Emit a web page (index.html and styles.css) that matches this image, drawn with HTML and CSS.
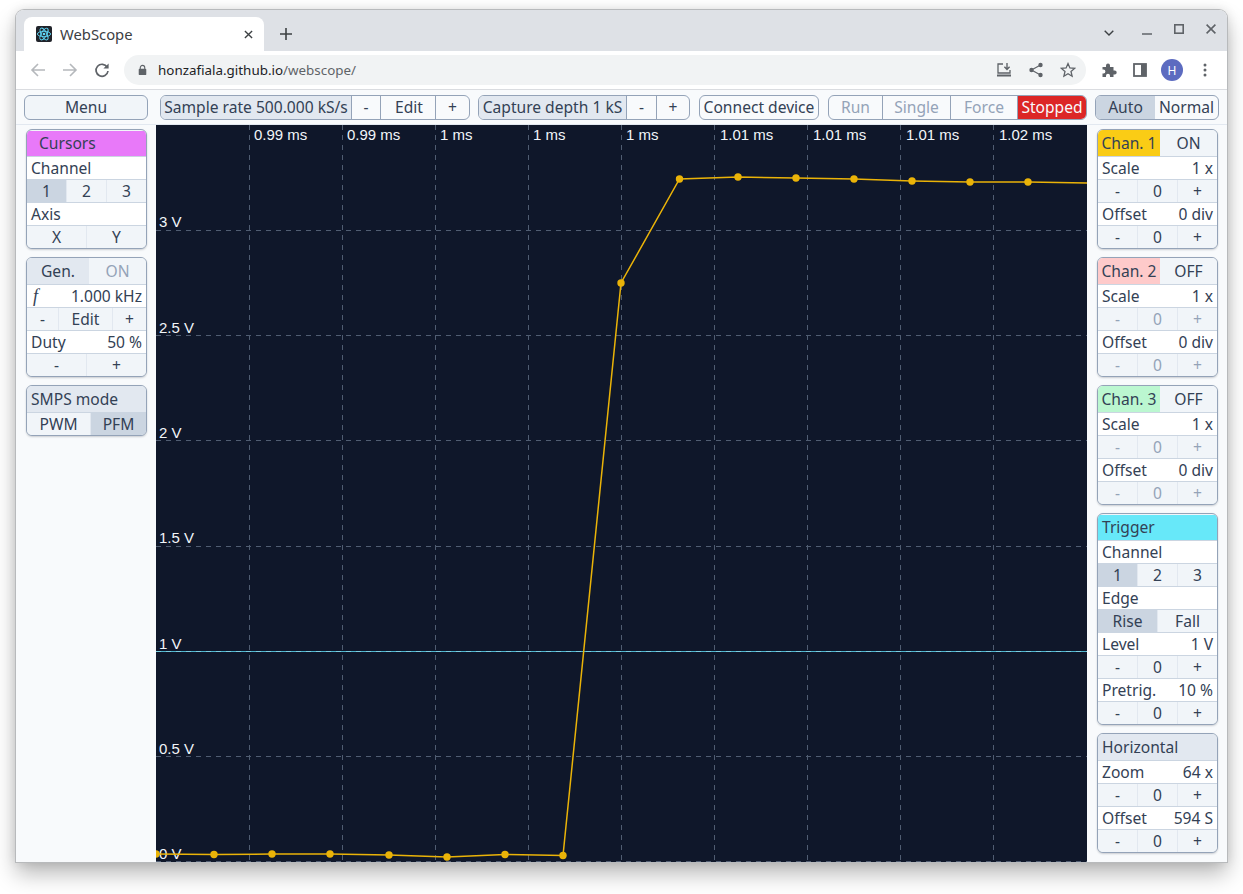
FILE: index.html
```html
<!DOCTYPE html>
<html lang="en">
<head>
<meta charset="utf-8">
<title>WebScope</title>
<link rel="stylesheet" href="styles.css">
</head>
<body>
<div class="window">
  <div class="tabstrip">
    <div class="tab">
      <svg class="favicon" viewBox="0 0 16 16"><rect width="16" height="16" rx="2" fill="#20232a"/><g fill="none" stroke="#61dafb" stroke-width=".9"><ellipse cx="8" cy="8" rx="6.6" ry="2.7"/><ellipse cx="8" cy="8" rx="6.6" ry="2.7" transform="rotate(60 8 8)"/><ellipse cx="8" cy="8" rx="6.6" ry="2.7" transform="rotate(120 8 8)"/></g><circle cx="8" cy="8" r="1.3" fill="#61dafb"/></svg>
      <span class="tabtitle">WebScope</span>
      <svg class="tabclose" viewBox="0 0 10 10"><path d="M1 1l8 8M9 1l-8 8" stroke="#3c4043" stroke-width="1.5"/></svg>
    </div>
    <svg class="newtab" viewBox="0 0 12 12"><path d="M6 0v12M0 6h12" stroke="#3c4043" stroke-width="1.6"/></svg>
    <div class="winctl">
      <svg class="chev" viewBox="0 0 10 6"><path d="M.7.7L5 5l4.3-4.3" fill="none" stroke="#3c4043" stroke-width="1.4"/></svg>
      <svg class="wmin" viewBox="0 0 10 2"><path d="M0 1h10" stroke="#5f6368" stroke-width="1.6"/></svg>
      <svg class="wmax" viewBox="0 0 10 10"><rect x=".8" y=".8" width="8.4" height="8.4" fill="none" stroke="#5f6368" stroke-width="1.6"/></svg>
      <svg class="wclose" viewBox="0 0 10 10"><path d="M.6.6l8.8 8.8M9.4.6L.6 9.4" stroke="#5f6368" stroke-width="1.6"/></svg>
    </div>
  </div>
  <div class="toolbar">
    <svg class="nav nav-first" viewBox="0 0 16 16"><path d="M15 8H2M8 2L2 8l6 6" fill="none" stroke="#b5b8bc" stroke-width="1.6"/></svg>
    <svg class="nav" viewBox="0 0 16 16"><path d="M1 8h13M8 2l6 6-6 6" fill="none" stroke="#b5b8bc" stroke-width="1.6"/></svg>
    <svg class="nav" viewBox="0 0 16 16"><path d="M13.2 5.2A6 6 0 1 0 14 9" fill="none" stroke="#5f6368" stroke-width="1.7"/><path d="M14.6 1.4v5.2H9.4z" fill="#5f6368"/></svg>
    <div class="omnibox">
      <svg class="lock" viewBox="0 0 10 12"><path d="M2.5 5V3.4a2.5 2.5 0 0 1 5 0V5" fill="none" stroke="#5f6368" stroke-width="1.2"/><rect x=".8" y="4.6" width="8.4" height="7" rx="1" fill="#5f6368"/></svg>
      <span class="url"><span class="host">honzafiala.github.io</span>/webscope/</span>
      <span class="omni-icons">
        <svg class="oi" viewBox="0 0 16 16"><path d="M7 2H2v9h12V8" fill="none" stroke="#5f6368" stroke-width="1.3"/><path d="M1 13.5h14" stroke="#5f6368" stroke-width="2"/><path d="M11 1v6M8.4 4.8L11 7.4l2.6-2.6" fill="none" stroke="#5f6368" stroke-width="1.4"/></svg>
        <svg class="oi" viewBox="0 0 16 16"><circle cx="12.5" cy="3" r="2.2" fill="#5f6368"/><circle cx="3.5" cy="8" r="2.2" fill="#5f6368"/><circle cx="12.5" cy="13" r="2.2" fill="#5f6368"/><path d="M12.5 3l-9 5 9 5" fill="none" stroke="#5f6368" stroke-width="1.2"/></svg>
        <svg class="oi" viewBox="0 0 16 16"><path d="M8 1.6l1.9 4.4 4.7.4-3.6 3.1 1.1 4.7L8 11.7l-4.1 2.5L5 9.5 1.4 6.4l4.7-.4z" fill="none" stroke="#5f6368" stroke-width="1.3"/></svg>
      </span>
    </div>
    <svg class="ext" viewBox="0 0 16 16"><path d="M1.5 5H5V3.6a2 2 0 0 1 4 0V5h3.5v3.4h1.2a2 2 0 0 1 0 4h-1.2V15H9v-1.2a2 2 0 0 0-4 0V15H1.5v-3.6h1a1.9 1.9 0 0 0 0-3.8h-1z" fill="#5f6368"/></svg>
    <svg class="side" viewBox="0 0 14 14"><rect x="1" y="1" width="12" height="12" fill="none" stroke="#5f6368" stroke-width="1.8"/><rect x="8" y="1" width="5" height="12" fill="#5f6368"/></svg>
    <span class="avatar">H</span>
    <svg class="dots" viewBox="0 0 4 14"><circle cx="2" cy="2" r="1.5" fill="#5f6368"/><circle cx="2" cy="7" r="1.5" fill="#5f6368"/><circle cx="2" cy="12" r="1.5" fill="#5f6368"/></svg>
  </div>
  <div class="app">
    <div class="topbar">
      <button class="btn menu">Menu</button>
      <div class="group g-rate"><span class="cell lab">Sample rate 500.000 kS/s</span><button class="cell rate-minus">-</button><button class="cell rate-edit">Edit</button><button class="cell rate-plus">+</button></div>
      <div class="group g-depth"><span class="cell lab">Capture depth 1 kS</span><button class="cell depth-minus">-</button><button class="cell depth-plus">+</button></div>
      <button class="btn connect">Connect device</button>
      <div class="group g-run"><button class="cell dis run">Run</button><button class="cell dis single">Single</button><button class="cell dis force">Force</button><button class="cell stopped">Stopped</button></div>
      <div class="group g-mode"><button class="cell on auto">Auto</button><button class="cell normal">Normal</button></div>
    </div>
    <div class="main">
      <div class="col">
        <section class="panel">
          <div class="row head magenta"><span class="indent">Cursors</span></div>
          <div class="row text"><span>Channel</span></div>
          <div class="row btns"><button class="on">1</button><button>2</button><button>3</button></div>
          <div class="row text"><span>Axis</span></div>
          <div class="row btns"><button>X</button><button>Y</button></div>
        </section>
        <section class="panel">
          <div class="row head split"><span class="hl gen">Gen.</span><span class="tog dim">ON</span></div>
          <div class="row text"><i class="f">f</i><span>1.000 kHz</span></div>
          <div class="row btns freq"><button>-</button><button>Edit</button><button>+</button></div>
          <div class="row text"><span>Duty</span><span>50 %</span></div>
          <div class="row btns"><button>-</button><button>+</button></div>
        </section>
        <section class="panel">
          <div class="row head plain"><span>SMPS mode</span></div>
          <div class="row btns smps"><button>PWM</button><button class="on">PFM</button></div>
        </section>
      </div>
      <svg class="plot" viewBox="0 0 931 737" preserveAspectRatio="none">
        <rect width="931" height="737" fill="#0f172a"/>
        <g class="grid">
          <path d="M93.5 0V737M186.5 0V737M279.5 0V737M372.5 0V737M465.5 0V737M558.5 0V737M651.5 0V737M744.5 0V737M837.5 0V737"/>
          <path d="M0 105.5H931M0 210.5H931M0 315.5H931M0 421.5H931M0 631.5H931M0 736.5H931"/>
        </g>
        <path class="trig" d="M0 526.5H931"/>
        <path class="trig-dash" d="M0 526.5H931"/>
        <g class="tlabels">
          <text x="98" y="15">0.99 ms</text><text x="191" y="15">0.99 ms</text><text x="284" y="15">1 ms</text><text x="377" y="15">1 ms</text><text x="470" y="15">1 ms</text><text x="564" y="15">1.01 ms</text><text x="657" y="15">1.01 ms</text><text x="750" y="15">1.01 ms</text><text x="843" y="15">1.02 ms</text>
          <text x="3" y="102">3 V</text><text x="3" y="208">2.5 V</text><text x="3" y="313">2 V</text><text x="3" y="418">1.5 V</text><text x="3" y="524">1 V</text><text x="3" y="629">0.5 V</text><text x="3" y="734">0 V</text>
        </g>
        <polyline class="trace" points="0,729 58,729.5 116,729 174,729 233,730 291,732 349,729.5 407,730.5 465,158 523.5,54 582,52 640,53 698,54 756,56 814,57 872,57 931,58"/>
        <g class="pts">
          <circle cx="0" cy="729" r="3.7"/><circle cx="58" cy="729.5" r="3.7"/><circle cx="116" cy="729" r="3.7"/><circle cx="174" cy="729" r="3.7"/><circle cx="233" cy="730" r="3.7"/><circle cx="291" cy="732" r="3.7"/><circle cx="349" cy="729.5" r="3.7"/><circle cx="407" cy="730.5" r="3.7"/><circle cx="465" cy="158" r="3.7"/><circle cx="523.5" cy="54" r="3.7"/><circle cx="582" cy="52" r="3.7"/><circle cx="640" cy="53" r="3.7"/><circle cx="698" cy="54" r="3.7"/><circle cx="756" cy="56" r="3.7"/><circle cx="814" cy="57" r="3.7"/><circle cx="872" cy="57" r="3.7"/>
        </g>
      </svg>
      <div class="col">
        <section class="panel">
          <div class="row head split"><span class="hl chan yellow">Chan. 1</span><span class="tog">ON</span></div>
          <div class="row text"><span>Scale</span><span>1 x</span></div>
          <div class="row btns"><button>-</button><button>0</button><button>+</button></div>
          <div class="row text"><span>Offset</span><span>0 div</span></div>
          <div class="row btns"><button>-</button><button>0</button><button>+</button></div>
        </section>
        <section class="panel">
          <div class="row head split"><span class="hl chan red">Chan. 2</span><span class="tog">OFF</span></div>
          <div class="row text"><span>Scale</span><span>1 x</span></div>
          <div class="row btns off"><button>-</button><button>0</button><button>+</button></div>
          <div class="row text"><span>Offset</span><span>0 div</span></div>
          <div class="row btns off"><button>-</button><button>0</button><button>+</button></div>
        </section>
        <section class="panel">
          <div class="row head split"><span class="hl chan green">Chan. 3</span><span class="tog">OFF</span></div>
          <div class="row text"><span>Scale</span><span>1 x</span></div>
          <div class="row btns off"><button>-</button><button>0</button><button>+</button></div>
          <div class="row text"><span>Offset</span><span>0 div</span></div>
          <div class="row btns off"><button>-</button><button>0</button><button>+</button></div>
        </section>
        <section class="panel">
          <div class="row head cyan"><span>Trigger</span></div>
          <div class="row text"><span>Channel</span></div>
          <div class="row btns"><button class="on">1</button><button>2</button><button>3</button></div>
          <div class="row text"><span>Edge</span></div>
          <div class="row btns"><button class="on">Rise</button><button>Fall</button></div>
          <div class="row text"><span>Level</span><span>1 V</span></div>
          <div class="row btns"><button>-</button><button>0</button><button>+</button></div>
          <div class="row text"><span>Pretrig.</span><span>10 %</span></div>
          <div class="row btns"><button>-</button><button>0</button><button>+</button></div>
        </section>
        <section class="panel">
          <div class="row head plain"><span>Horizontal</span></div>
          <div class="row text"><span>Zoom</span><span>64 x</span></div>
          <div class="row btns"><button>-</button><button>0</button><button>+</button></div>
          <div class="row text"><span>Offset</span><span>594 S</span></div>
          <div class="row btns"><button>-</button><button>0</button><button>+</button></div>
        </section>
      </div>
    </div>
  </div>
</div>
</body>
</html>
```
FILE: styles.css
```css
* { box-sizing: border-box; }
html, body { margin: 0; height: 100%; }
body { background: #fff; padding: 10px 16px 32px; overflow: hidden; font-family: "Noto Sans", sans-serif; }
button { font: inherit; color: inherit; background: none; border: 0; padding: 0; margin: 0; }

.window { width: 1211px; height: 852px; display: flex; flex-direction: column; border-radius: 8px 8px 0 0; box-shadow: 0 0 0 1px #b8babc, 0 12px 22px rgba(0,0,0,.28), 0 0 12px rgba(0,0,0,.12); overflow: hidden; background: #fff; }

.tabstrip { height: 41px; flex: none; background: #dee1e6; display: flex; align-items: flex-end; padding-left: 8px; }
.tab { width: 240px; height: 34px; background: #fff; border-radius: 8px 8px 0 0; display: flex; align-items: center; padding: 0 12px; }
.favicon { width: 16px; height: 16px; flex: none; margin-right: 8px; }
.tabtitle { font: 14.8px "Noto Sans", sans-serif; color: #3c4043; flex: 1; margin-bottom: 1px; }
.tabclose { width: 9px; height: 9px; margin-right: -1px; }
.newtab { width: 12px; height: 12px; margin: 0 0 11px 16px; }
.winctl { margin-left: auto; height: 100%; display: flex; align-items: center; padding-right: 11px; }
.chev { width: 10px; height: 6px; margin: 4px 0 0; }
.wmin { width: 10px; height: 2px; margin: 7px 0 0 28px; }
.wmax { width: 10px; height: 10px; margin: -4px 0 0 22px; }
.wclose { width: 10px; height: 10px; margin: -4px 0 0 22px; }

.toolbar { height: 39px; flex: none; background: #fff; border-bottom: 1px solid #dadce0; display: flex; align-items: center; }
.nav { width: 16px; height: 16px; margin-left: 16px; flex: none; }
.nav-first { margin-left: 14px; }
.omnibox { width: 962px; height: 30px; margin-left: 14px; background: #f1f3f4; border-radius: 15px; display: flex; align-items: center; padding: 0 10px 0 14px; }
.lock { width: 9px; height: 12px; flex: none; }
.url { margin-left: 11px; font: 13.4px "Noto Sans", sans-serif; color: #5f6368; }
.host { color: #202124; }
.omni-icons { margin-left: auto; display: flex; gap: 16px; }
.oi { width: 16px; height: 16px; }
.ext { width: 16px; height: 16px; margin-left: 15px; }
.side { width: 14px; height: 14px; margin-left: 16px; }
.avatar { width: 22px; height: 22px; margin-left: 14px; border-radius: 50%; background: #5c6bc0; color: #fff; font: 12px "Noto Sans", sans-serif; display: flex; align-items: center; justify-content: center; }
.dots { width: 4px; height: 14px; margin-left: 20px; }

.app { flex: 1; min-height: 0; display: flex; flex-direction: column; background: #f8fafc; color: #334155; font-size: 15.6px; line-height: 22px; }
.topbar { height: 35px; flex: none; border-bottom: 1px solid #e2e8f0; display: flex; align-items: center; padding: 0 8px; }
.btn { height: 25px; border: 1px solid #94a3b8; border-radius: 6px; background: #f1f5f9; text-align: center; }
.menu { width: 124px; }
.connect { width: 120px; margin-left: 9px; background: #f8fafc; }
.group { height: 25px; display: flex; border: 1px solid #94a3b8; border-radius: 6px; overflow: hidden; background: #f8fafc; }
.g-rate { margin-left: 12px; width: 310px; }
.g-depth { margin-left: 8px; width: 212px; }
.g-run { margin-left: 9px; width: 259px; }
.g-mode { margin-left: 8px; width: 124px; }
.cell { height: 100%; display: flex; align-items: center; justify-content: center; border-left: 1px solid #94a3b8; flex: none; white-space: nowrap; }
.cell:first-child { border-left: 0; }
.lab { flex: 1; min-width: 0; background: #e2e8f0; }
.rate-minus { width: 29px; }
.rate-edit { width: 55px; padding-left: 2px; }
.rate-plus { width: 34px; }
.depth-minus { width: 30px; }
.depth-plus { width: 33px; }
.run { width: 53px; }
.single { width: 68px; }
.force { width: 67px; }
.dis { color: #94a3b8; }
.stopped { flex: 1; background: #dc2626; color: #f8fafc; }
.auto { width: 59px; background: #cbd5e1; }
.normal { flex: 1; border-left: 0; }

.main { flex: 1; min-height: 0; display: flex; }
.col { width: 140px; flex: none; display: flex; flex-direction: column; gap: 8px; padding: 4px 9px 0 10px; }
.plot { width: 931px; height: 737px; flex: none; display: block; }

.panel { border: 1px solid #94a3b8; border-radius: 6px; overflow: hidden; box-shadow: 0 1px 2px rgba(15,23,42,.2); background: #f1f5f9; flex: none; }
.row { display: flex; align-items: center; border-top: 1px solid #cbd5e1; }
.row:first-child { border-top: 0; }
.head { height: 26px; background: #e2e8f0; }
.head.magenta { background: #e879f9; height: 25px; margin-top: 1px; padding-bottom: 2px; }
.head.cyan { background: #67e8f9; height: 25px; margin-top: 1px; padding: 0 4px 2px; }
.head.plain { padding: 0 4px; }
.indent { margin-left: 12px; }
.split { background: #f1f5f9; }
.hl { height: 100%; display: flex; align-items: center; justify-content: center; flex: none; width: 62px; }
.gen { background: #e2e8f0; }
.yellow { background: #facc15; }
.red { background: #fecaca; }
.green { background: #bbf7d0; }
.tog { flex: 1; text-align: center; }
.dim { color: #94a3b8; }
.text { height: 23px; background: #fff; justify-content: space-between; padding: 0 4px; }
.f { font-family: "Liberation Serif", serif; font-size: 18px; padding-left: 2px; }
.btns { height: 23px; }
.btns button { flex: 1 1 0; height: 100%; background: #f1f5f9; text-align: center; border-left: 1px solid #e2e8f0; }
.btns button:first-child { border-left: 0; }
.btns button.on { background: #cbd5e1; }
.freq button:nth-child(1) { flex: 0 0 31px; }
.freq button:nth-child(2) { flex: 0 0 54px; }
.smps button:nth-child(1) { flex: 0 0 63px; }
.off button { color: #94a3b8; }

.grid path { stroke: #505d72; stroke-width: 1; stroke-dasharray: 5 5; fill: none; }
.trig { stroke: #4db3cc; stroke-width: 1; fill: none; }
.trig-dash { stroke: #7ccfe2; stroke-width: 1; stroke-dasharray: 5 5; fill: none; }
.tlabels text { font: 15px "Liberation Sans", Arial, sans-serif; fill: #f1f5f9; }
.trace { fill: none; stroke: #eab308; stroke-width: 1.5; }
.pts circle { fill: #eab308; }
```
